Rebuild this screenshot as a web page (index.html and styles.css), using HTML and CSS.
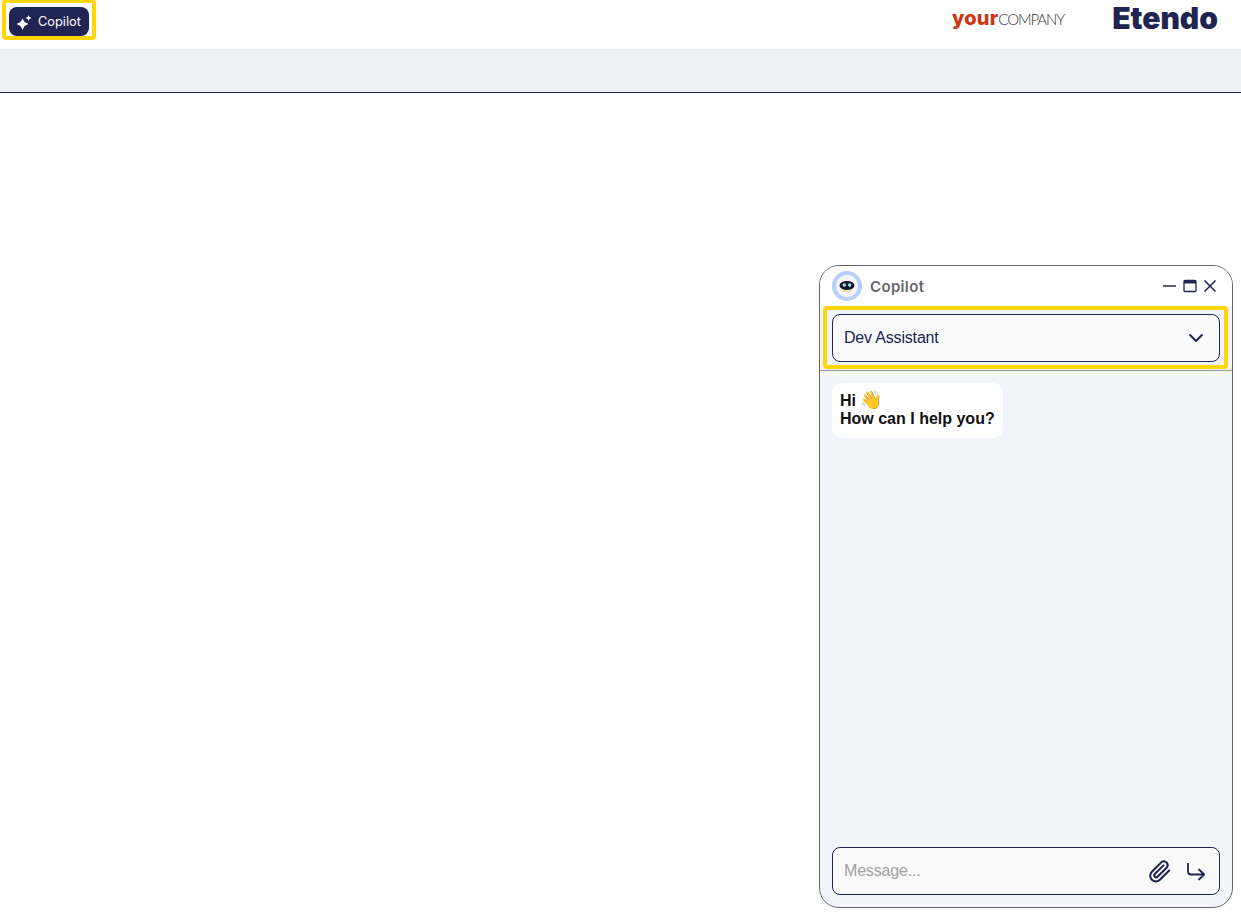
FILE: index.html
```html
<html>
    <head>
        <meta charset="utf-8">
        <meta name="viewport" content="width=device-width">
        <title>Copilot</title>
        <link rel="stylesheet" href="styles.css">
    </head>
    <body>
        <div class="topbar">
            <div class="highlight-btn">
                <button class="copilot-btn">
                    <svg class="spark" width="16" height="16" viewBox="0 0 16 16">
                        <path d="M6.500 4.500 8.500 8 12.500 10 8.500 12 6.500 16 4.500 12 .5 10 4.500 8Z" fill="#fff"/>
                        <path d="M12.500 1 13.400 3.100 15.500 4 13.400 4.900 12.500 7 11.600 4.900 9.500 4 11.600 3.100Z" fill="#fff"/>
                    </svg>
                    Copilot
                </button>
            </div>
            <div class="logos">
                <span class="logo-company"><b>your</b>COMPANY</span>
                <span class="logo-etendo">Etendo</span>
            </div>
        </div>
        <div class="subbar"></div>

        <!-- floating chat window -->
        <div class="chat">
            <div class="chat-head">
                <div class="avatar">
                    <svg width="30" height="30" viewBox="0 0 30 30">
                        <circle cx="15" cy="15" r="13" fill="#f4f6fb" stroke="#b5d0fb" stroke-width="4"/>
                        <ellipse cx="15" cy="14.500" rx="7.500" ry="4.500" fill="#141a2b"/>
                        <circle cx="12.300" cy="14" r="1.700" fill="#9fe3f5"/>
                        <circle cx="17.700" cy="14" r="1.700" fill="#9fe3f5"/>
                        <path d="M10.500 20h9" stroke="#e8c64a" stroke-width="1"/>
                    </svg>
                </div>
                <span class="chat-title">Copilot</span>
                <div class="win-icons">
                    <svg width="14" height="14" viewBox="0 0 14 14"><path d="M0 7h13" stroke="#202452" stroke-width="1.500"/></svg>
                    <svg width="14" height="14" viewBox="0 0 14 14"><rect x="1" y="1.500" width="12" height="11" rx="1" fill="none" stroke="#202452" stroke-width="1.300"/><path d="M1 3h12" stroke="#202452" stroke-width="3"/></svg>
                    <svg width="14" height="14" viewBox="0 0 14 14"><path d="M1.500 1.500l11 11M12.500 1.500l-11 11" stroke="#202452" stroke-width="1.500"/></svg>
                </div>
            </div>
            <div class="select-area">
                <div class="highlight-select">
                    <div class="select">
                        <span>Dev Assistant</span>
                        <svg width="16" height="10" viewBox="0 0 16 10"><path d="M2 2l6 6 6-6" fill="none" stroke="#202452" stroke-width="2" stroke-linecap="round" stroke-linejoin="round"/></svg>
                    </div>
                </div>
            </div>
            <div class="messages">
                <div class="bubble">Hi <span class="emoji">👋</span><br>How can I help you?</div>
            </div>
            <div class="composer">
                <div class="input-box">
                    <span class="placeholder">Message...</span>
                    <svg class="clip" width="26" height="26" viewBox="0 0 24 24"><path d="M20.500 11.500l-8.600 8.600a5.200 5.200 0 0 1-7.400-7.400l8.900-8.900a3.500 3.500 0 0 1 4.900 4.900l-8.600 8.600a1.700 1.700 0 0 1-2.500-2.500l8-8" fill="none" stroke="#202452" stroke-width="1.900" stroke-linecap="round" stroke-linejoin="round"/></svg>
                    <svg class="send" width="20" height="20" viewBox="0 0 20 20"><path d="M2 .5v8a3 3 0 0 0 3 3h13M13 6.500l5.200 5-5.200 5" fill="none" stroke="#202452" stroke-width="1.800" stroke-linecap="round" stroke-linejoin="round"/></svg>
                </div>
            </div>
        </div>
    </body>
</html>
```

FILE: styles.css
```css
body {
    margin: 0;
    font-family: 'Liberation Sans', sans-serif;
    background-color: #fff;
}
.topbar {
    height: 49px;
    display: flex;
    justify-content: space-between;
    padding-left: 2px;
    padding-right: 23px;
}
.highlight-btn {
    width: 94px;
    height: 41px;
    margin-top: -1px;
    box-sizing: border-box;
    border: 4px solid #ffd60a;
    border-radius: 4px;
    padding: 4px 3px 0;
}
.copilot-btn {
    width: 80px;
    height: 29px;
    border: none;
    border-radius: 8px;
    background-color: #202452;
    color: #fff;
    font-family: 'Inter', sans-serif;
    font-size: 12.800px;
    display: flex;
    align-items: center;
    gap: 6px;
    padding: 0 0 0 7px;
}
.logos {
    display: flex;
    align-items: center;
    height: 36px;
    gap: 48px;
}
.logo-company {
    font-family: 'Lato', sans-serif;
    font-weight: 300;
    font-size: 15px;
    letter-spacing: -1.100px;
    color: #333;
}
.logo-company b {
    font-family: 'Inter', sans-serif;
    font-size: 20px;
    font-weight: 800;
    letter-spacing: 0.200px;
    color: #cf3413;
}
.logo-etendo {
    font-family: 'Inter', sans-serif;
    font-weight: 900;
    font-size: 30px;
    color: #202452;
}
.subbar {
    height: 43px;
    background-color: #eff0f5;
    border-bottom: 1px solid #202452;
}
.chat {
    position: fixed;
    left: 819px;
    top: 265px;
    width: 414px;
    height: 643px;
    box-sizing: border-box;
    border: 1px solid #666;
    border-radius: 20px;
    background-color: #f2f5fa;
    display: flex;
    flex-direction: column;
    overflow: hidden;
}
.chat-head {
    height: 40px;
    background-color: #fff;
    display: flex;
    align-items: center;
    padding: 0 15px 0 12px;
    flex-shrink: 0;
}
.avatar {
    width: 30px;
    height: 30px;
    margin-right: 8px;
}
.chat-title {
    font-family: 'Inter', sans-serif;
    font-size: 15px;
    font-weight: 600;
    letter-spacing: 0.350px;
    color: #666;
}
.win-icons {
    margin-left: auto;
    display: flex;
    gap: 6px;
}
.select-area {
    height: 65px;
    box-sizing: border-box;
    background-color: #f2f5fa;
    border-bottom: 1px solid #999;
    flex-shrink: 0;
}
.highlight-select {
    margin-left: 3px;
    width: 405px;
    height: 63px;
    box-sizing: border-box;
    border: 4px solid #ffd60a;
    border-radius: 4px;
    padding: 4px 4px 3px 5px;
}
.select {
    height: 48px;
    box-sizing: border-box;
    border: 1px solid #202452;
    border-radius: 8px;
    background-color: #fafafa;
    display: flex;
    align-items: center;
    justify-content: space-between;
    padding: 0 15px 0 11px;
    font-size: 16px;
    letter-spacing: -0.180px;
    color: #202452;
}
.messages {
    flex: 1;
    padding: 12px;
}
.bubble {
    display: inline-block;
    background-color: #fff;
    border-radius: 10px;
    padding: 8px 8px 10px;
    font-size: 16px;
    font-weight: bold;
    line-height: 18px;
    color: #111;
}
.emoji {
    font-size: 18px;
}
.composer {
    padding: 0 12px 12px;
}
.input-box {
    height: 48px;
    box-sizing: border-box;
    border: 1px solid #202452;
    border-radius: 8px;
    background-color: #fafafa;
    display: flex;
    align-items: center;
    padding: 0 13px 0 11px;
}
.placeholder {
    flex: 1;
    font-size: 16px;
    letter-spacing: -0.180px;
    color: #a0a0a0;
}
.clip {
    margin-right: 13px;
}
.send {
    margin-top: 3px;
}
```
